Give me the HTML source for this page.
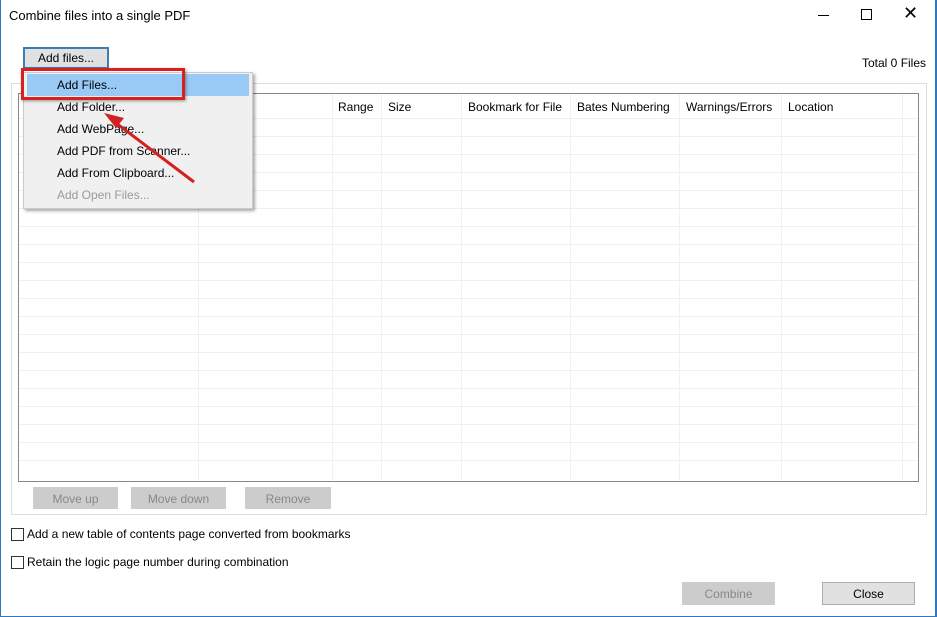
<!DOCTYPE html><html><head><style>
body{margin:0;width:937px;height:617px;background:#fff;position:relative;overflow:hidden;font-family:"Liberation Sans",sans-serif;font-size:12px;color:#000}
.a{position:absolute}
.btn{position:absolute;background:#ccc;color:#888;text-align:center;line-height:22px;height:22px;border:1px solid #ccc;box-sizing:border-box}
.rowl{position:absolute;left:19px;width:898px;height:1px;background:#f0f0f0}
.coll{position:absolute;top:94px;width:1px;height:386px;background:#f0f0f0}
.hd{position:absolute;top:100px}
.mi{position:absolute;left:57px}
</style></head><body>
<div class="a" style="left:0;top:0;width:1px;height:617px;background:#2b78c5"></div>
<div class="a" style="right:0;top:0;width:2px;height:617px;background:#2b78c5"></div>
<div class="a" style="left:0;bottom:0;width:937px;height:1px;background:#2b78c5"></div>
<div class="a" style="left:9px;top:8px;font-size:13px">Combine files into a single PDF</div>
<div class="a" style="left:818px;top:15px;width:11px;height:1px;background:#000"></div>
<div class="a" style="left:861px;top:9px;width:9px;height:9px;border:1px solid #000"></div>
<div class="a" style="left:903px;top:3px;font-size:18px">✕</div>
<div class="a" style="left:862px;top:56px">Total 0 Files</div>
<div class="a" style="left:11px;top:83px;width:914px;height:430px;border:1px solid #ddd"></div>
<div class="a" style="left:18px;top:93px;width:899px;height:387px;border:1px solid #888;background:#fff"></div>
<div class="a" style="left:19px;top:94px;width:898px;height:24px;background:#fff;border-bottom:1px solid #eee"></div>
<div class="coll" style="left:198px"></div><div class="coll" style="left:332px"></div><div class="coll" style="left:381px"></div><div class="coll" style="left:461px"></div><div class="coll" style="left:570px"></div><div class="coll" style="left:679px"></div><div class="coll" style="left:781px"></div><div class="coll" style="left:902px"></div>
<div class="rowl" style="top:136px"></div><div class="rowl" style="top:154px"></div><div class="rowl" style="top:172px"></div><div class="rowl" style="top:190px"></div><div class="rowl" style="top:208px"></div><div class="rowl" style="top:226px"></div><div class="rowl" style="top:244px"></div><div class="rowl" style="top:262px"></div><div class="rowl" style="top:280px"></div><div class="rowl" style="top:298px"></div><div class="rowl" style="top:316px"></div><div class="rowl" style="top:334px"></div><div class="rowl" style="top:352px"></div><div class="rowl" style="top:370px"></div><div class="rowl" style="top:388px"></div><div class="rowl" style="top:406px"></div><div class="rowl" style="top:424px"></div><div class="rowl" style="top:442px"></div><div class="rowl" style="top:460px"></div>
<div class="hd" style="left:338px">Range</div><div class="hd" style="left:388px">Size</div><div class="hd" style="left:468px">Bookmark for File</div><div class="hd" style="left:577px">Bates Numbering</div><div class="hd" style="left:686px">Warnings/Errors</div><div class="hd" style="left:788px">Location</div>
<div class="btn" style="left:33px;top:487px;width:85px">Move up</div>
<div class="btn" style="left:131px;top:487px;width:95px">Move down</div>
<div class="btn" style="left:245px;top:487px;width:86px">Remove</div>
<div class="a" style="left:11px;top:528px;width:11px;height:11px;border:1px solid #333"></div>
<div class="a" style="left:27px;top:527px">Add a new table of contents page converted from bookmarks</div>
<div class="a" style="left:11px;top:556px;width:11px;height:11px;border:1px solid #333"></div>
<div class="a" style="left:27px;top:555px">Retain the logic page number during combination</div>
<div class="btn" style="left:682px;top:582px;width:93px;height:23px">Combine</div>
<div class="btn" style="left:822px;top:582px;width:93px;height:23px;background:#e1e1e1;border-color:#adadad;color:#000">Close</div>
<div class="a" style="left:23px;top:47px;width:86px;height:22px;box-sizing:border-box;border:2px solid #3c7fb1;background:#e1e1e1;text-align:center;line-height:18px">Add files...</div>
<div class="a" style="left:23px;top:72px;width:230px;height:137px;background:#f0f0f0;border:1px solid #ccc;box-sizing:border-box;box-shadow:2px 2px 3px rgba(0,0,0,.35)"></div>
<div class="a" style="left:27px;top:74px;width:222px;height:22px;background:#99c9f5"></div>
<div class="mi" style="top:78px">Add Files...</div>
<div class="mi" style="top:100px">Add Folder...</div>
<div class="mi" style="top:122px">Add WebPage...</div>
<div class="mi" style="top:144px">Add PDF from Scanner...</div>
<div class="mi" style="top:166px">Add From Clipboard...</div>
<div class="mi" style="top:188px;color:#999">Add Open Files...</div>
<div class="a" style="left:21px;top:68px;width:164px;height:32px;box-sizing:border-box;border:3px solid #d9201f;box-shadow:1px 1px 3px rgba(0,0,0,.4)"></div>
<svg class="a" style="left:0;top:0" width="937" height="617"><line x1="194" y1="182" x2="112" y2="120" stroke="#d42020" stroke-width="3"/><polygon points="104,113 124,118 116,128" fill="#d42020"/></svg>
</body></html>
